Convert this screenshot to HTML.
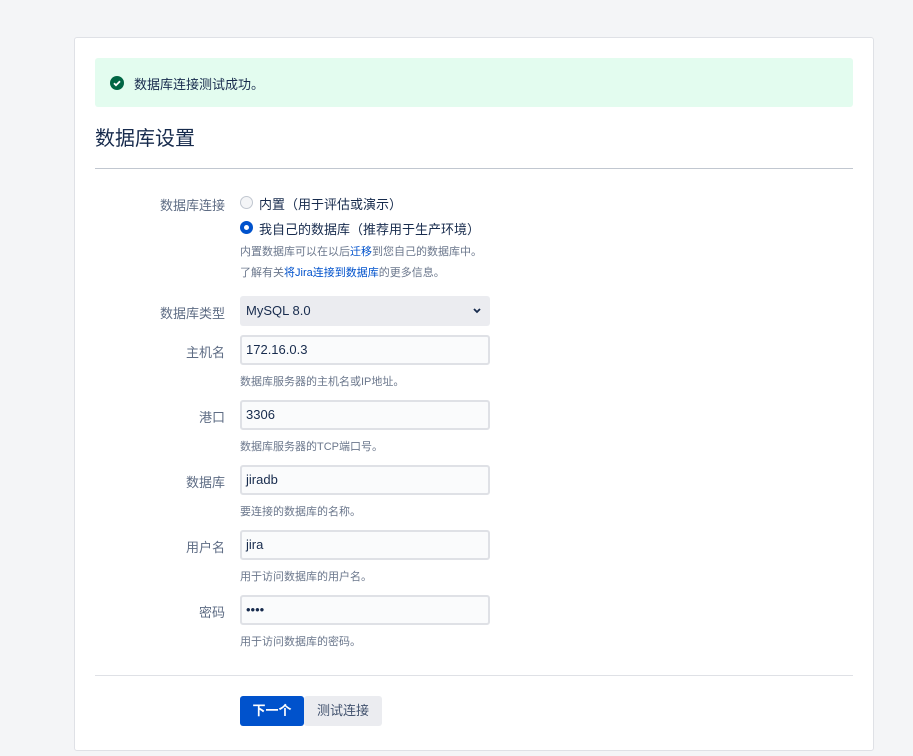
<!DOCTYPE html>
<html><head><meta charset="utf-8"><style>
*{box-sizing:border-box;margin:0;padding:0}
body{width:913px;height:756px;background:#f4f5f7;font-family:"Liberation Sans","Noto Sans CJK SC",sans-serif;color:#172b4d;position:relative;overflow:hidden}
.a{position:absolute;white-space:nowrap}
.card{left:74px;top:37px;width:800px;height:714px;background:#fff;border:1px solid #dfe1e6;border-radius:3px}
.lbl{font-size:13px;color:#5e6c84;text-align:right;width:140px;left:85px}
.help{font-size:11px;color:#6b778c;left:240px}
.inp{left:240px;width:250px;height:30px;border:2px solid #dfe1e6;background:#fafbfc;border-radius:3px;font-size:13px;padding:0 0 0 4px;line-height:26px;color:#172b4d}
a{color:#0052cc;text-decoration:none}
.rad{left:240px;width:13px;height:13px;border-radius:50%}
.rt{font-size:13px;left:259px}
</style></head><body>
<div class="a card"></div>
<div class="a" style="left:95px;top:58px;width:758px;height:49px;background:#e3fcef;border-radius:3px"></div>
<svg class="a" style="left:110px;top:76px" width="14" height="14" viewBox="0 0 14 14"><circle cx="7" cy="7" r="7" fill="#006644"/><path d="M4 7.2l2 2 4-4" stroke="#fff" stroke-width="1.8" fill="none"/></svg>
<div class="a" style="left:134px;top:74px;font-size:13px;color:#172b4d">数据库连接测试成功。</div>
<div class="a" style="left:95px;top:122px;font-size:20px;color:#172b4d">数据库设置</div>
<div class="a" style="left:95px;top:168px;width:758px;height:1px;background:#c1c7d0"></div>

<div class="a lbl" style="top:195px">数据库连接</div>
<div class="a rad" style="top:196px;border:1px solid #c1c7d0;background:#f4f5f7"></div>
<div class="a rt" style="top:194px">内置（用于评估或演示）</div>
<div class="a rad" style="top:221px;background:#0052cc;border:4px solid #0052cc"><div style="width:5px;height:5px;background:#fff;border-radius:50%;position:absolute;left:0;top:0"></div></div>
<div class="a rt" style="top:219px">我自己的数据库（推荐用于生产环境）</div>
<div class="a help" style="top:243px">内置数据库可以在以后<a>迁移</a>到您自己的数据库中。</div>
<div class="a help" style="top:264px">了解有关<a>将Jira连接到数据库</a>的更多信息。</div>

<div class="a lbl" style="top:303px">数据库类型</div>
<div class="a" style="left:240px;top:296px;width:250px;height:30px;background:#ebecf0;border-radius:3px;font-size:13px;line-height:30px;padding-left:6px">MySQL 8.0</div>
<svg class="a" style="left:472px;top:307px" width="10" height="8" viewBox="0 0 10 8"><path d="M2 2l3 3 3-3" stroke="#172b4d" stroke-width="1.8" fill="none"/></svg>

<div class="a lbl" style="top:342px">主机名</div>
<div class="a inp" style="top:335px">172.16.0.3</div>
<div class="a help" style="top:373px">数据库服务器的主机名或IP地址。</div>

<div class="a lbl" style="top:407px">港口</div>
<div class="a inp" style="top:400px">3306</div>
<div class="a help" style="top:438px">数据库服务器的TCP端口号。</div>

<div class="a lbl" style="top:472px">数据库</div>
<div class="a inp" style="top:465px">jiradb</div>
<div class="a help" style="top:503px">要连接的数据库的名称。</div>

<div class="a lbl" style="top:537px">用户名</div>
<div class="a inp" style="top:530px">jira</div>
<div class="a help" style="top:568px">用于访问数据库的用户名。</div>

<div class="a lbl" style="top:602px">密码</div>
<div class="a inp" style="top:595px;font-size:13px;letter-spacing:0px">••••</div>
<div class="a help" style="top:633px">用于访问数据库的密码。</div>

<div class="a" style="left:95px;top:675px;width:758px;height:1px;background:#dfe1e6"></div>
<div class="a" style="left:240px;top:696px;width:64px;height:30px;background:#0052cc;color:#fff;border-radius:3px;font-size:13px;font-weight:bold;line-height:30px;text-align:center">下一个</div>
<div class="a" style="left:304px;top:696px;width:78px;height:30px;background:#ebecf0;color:#42526e;border-radius:3px;font-size:13px;line-height:30px;text-align:center">测试连接</div>
</body></html>
